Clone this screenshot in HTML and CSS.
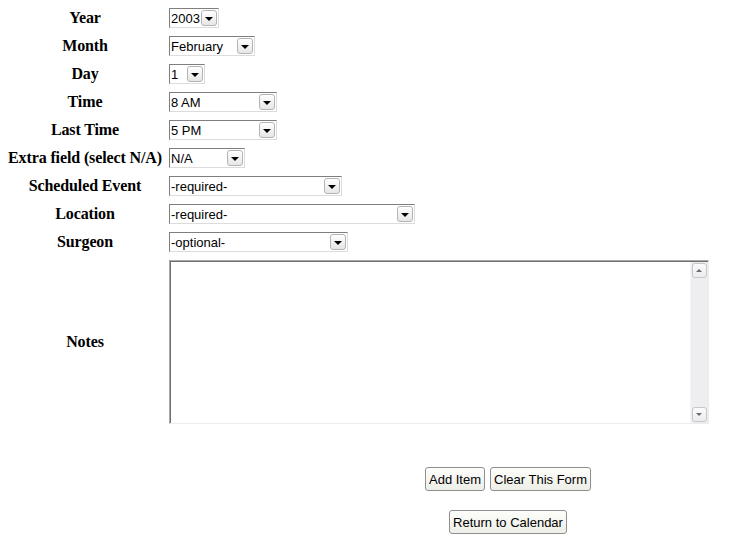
FILE: index.html
```html
<!DOCTYPE html>
<html lang="en">
<head>
  <meta charset="UTF-8" />
  <title>Add Calendar Item</title>
  <link rel="stylesheet" href="styles.css">
</head>
<body>

  <form class="entry">
    <label class="lbl">Year</label>
    <span class="pick w-year"><select><option>2003</option></select><span class="arrow"></span></span>

    <label class="lbl">Month</label>
    <span class="pick w-month"><select><option>February</option></select><span class="arrow"></span></span>

    <label class="lbl">Day</label>
    <span class="pick w-day"><select><option>1</option></select><span class="arrow"></span></span>

    <label class="lbl">Time</label>
    <span class="pick w-time"><select><option>8 AM</option></select><span class="arrow"></span></span>

    <label class="lbl">Last Time</label>
    <span class="pick w-time"><select><option>5 PM</option></select><span class="arrow"></span></span>

    <label class="lbl">Extra field (select N/A)</label>
    <span class="pick w-extra"><select><option>N/A</option></select><span class="arrow"></span></span>

    <label class="lbl">Scheduled Event</label>
    <span class="pick w-event"><select><option>-required-</option></select><span class="arrow"></span></span>

    <label class="lbl">Location</label>
    <span class="pick w-location"><select><option>-required-</option></select><span class="arrow"></span></span>

    <label class="lbl">Surgeon</label>
    <span class="pick w-surgeon"><select><option>-optional-</option></select><span class="arrow"></span></span>

    <label class="lbl">Notes</label>
    <div class="notes">
      <textarea></textarea>
      <div class="scroll">
        <span class="sb up"></span>
        <span class="track"></span>
        <span class="sb down"></span>
      </div>
    </div>

    <div class="actions first">
      <button type="button">Add Item</button>
      <button type="button">Clear This Form</button>
    </div>
    <div class="actions">
      <button type="button">Return to Calendar</button>
    </div>
  </form>

</body>
</html>
```

FILE: styles.css
```css
body {
  margin: 8px;
  background: #fff;
  color: #000;
  font-family: "Liberation Serif", "Times New Roman", serif;
}

.entry {
  display: grid;
  grid-template-columns: 154px 540px;
  column-gap: 7px;
  row-gap: 8px;
  align-items: center;
}

.lbl {
  font-weight: bold;
  font-size: 16px;
  letter-spacing: -0.12px;
  text-align: center;
  line-height: 20px;
  white-space: nowrap;
}

/* dropdowns */
.pick {
  position: relative;
  display: block;
  height: 20px;
  box-sizing: border-box;
  border: 1px solid;
  border-color: #7f7f7f #dcdcdc #dcdcdc #7f7f7f;
  background: #fff;
}

.pick select {
  appearance: none;
  -webkit-appearance: none;
  border: none;
  outline: none;
  background: transparent;
  margin: 0;
  padding: 0 0 0 1px;
  width: 100%;
  height: 18px;
  font-family: "Liberation Sans", Arial, sans-serif;
  font-size: 13px;
  color: #000;
}

.pick .arrow {
  position: absolute;
  top: 1px;
  right: 1px;
  width: 16px;
  height: 16px;
  box-sizing: border-box;
  border: 1px solid #b4b4b4;
  border-radius: 3px;
  background: linear-gradient(#ffffff, #e6e6e6);
}

.pick .arrow::after {
  content: "";
  position: absolute;
  left: 3px;
  top: 6px;
  border-left: 4px solid transparent;
  border-right: 4px solid transparent;
  border-top: 4px solid #000;
}

.w-year { width: 50px; }
.w-month { width: 86px; }
.w-day { width: 36px; }
.w-time { width: 108px; }
.w-extra { width: 76px; }
.w-event { width: 173px; }
.w-location { width: 246px; }
.w-surgeon { width: 179px; }

/* notes box */
.notes {
  display: flex;
  height: 164px;
  box-sizing: border-box;
  border: 1px solid;
  border-color: #a9a9a9 #ececec #ececec #a9a9a9;
  box-shadow: inset 1px 1px 0 #6f6f6f;
  padding: 1px 0 0 1px;
  background: #fff;
}

.notes textarea {
  flex: 1;
  border: none;
  outline: none;
  resize: none;
  margin: 0;
  padding: 0;
  background: transparent;
  font-family: "Liberation Sans", Arial, sans-serif;
  font-size: 13px;
}

.scroll {
  width: 17px;
  display: flex;
  flex-direction: column;
  background: #eeeef0;
  border-left: 1px solid #f4f4f4;
}

.scroll .track {
  flex: 1;
}

.sb {
  position: relative;
  height: 15px;
  margin: 1px;
  box-sizing: border-box;
  border: 1px solid #c6c6cc;
  border-radius: 3px;
  background: linear-gradient(#fbfbfb, #ececef);
}

.sb::after {
  content: "";
  position: absolute;
  left: 3px;
  top: 5px;
  border-left: 3.5px solid transparent;
  border-right: 3.5px solid transparent;
}

.sb.up::after {
  border-bottom: 3px solid #6a6a70;
}

.sb.down::after {
  border-top: 3px solid #6a6a70;
}

/* buttons */
.actions {
  grid-column: 2;
  display: flex;
  justify-content: center;
  gap: 5px;
  padding-left: 138px;
  margin-top: 11px;
}

.actions.first {
  margin-top: 35px;
}

.actions button {
  height: 24px;
  padding: 0 3px;
  margin: 0;
  border: 1px solid #8f8f8f;
  border-radius: 3px;
  background: linear-gradient(#fdfdfb, #eeeee8);
  font-family: "Liberation Sans", Arial, sans-serif;
  font-size: 13px;
  color: #000;
}
```
